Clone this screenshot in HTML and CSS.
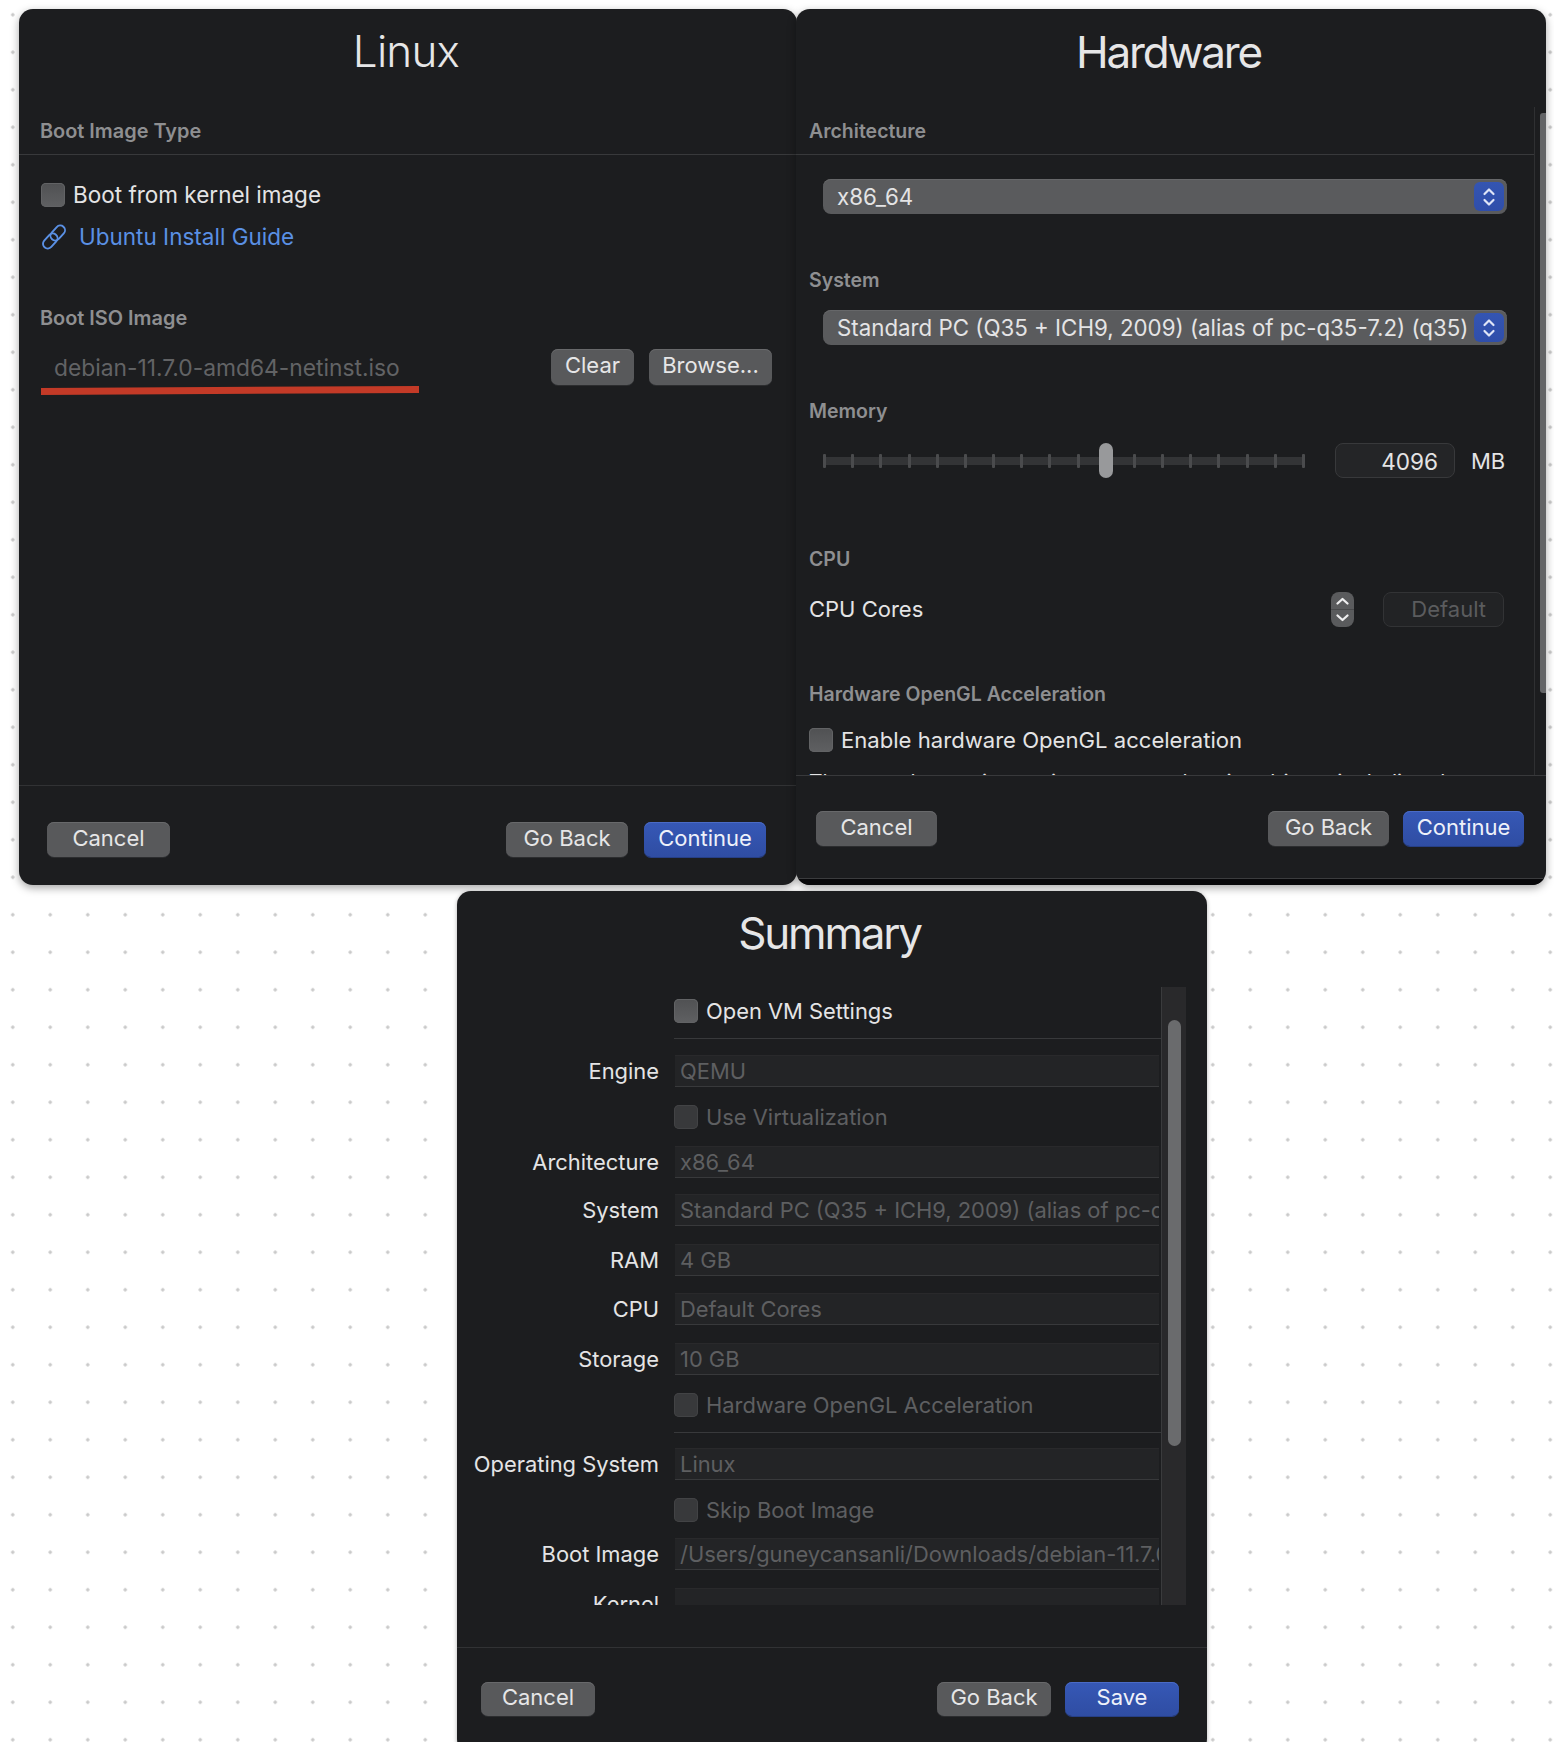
FILE: index.html
```html
<!DOCTYPE html>
<html lang="en">

<head>
    <meta charset="UTF-8" />
    <meta name="viewport" content="width=device-width, initial-scale=1.0" />
    <title>New VM wizard</title>
    <link rel="stylesheet" href="styles.css">
</head>

<body>
    <svg class="sprites" width="0" height="0">
        <symbol id="updown" viewBox="0 0 14 22">
            <path d="M2.5 8 L7 3.5 L11.5 8 M2.5 14 L7 18.5 L11.5 14" fill="none" stroke="currentColor" stroke-width="2.2" stroke-linecap="round" stroke-linejoin="round" />
        </symbol>
        <symbol id="spin" viewBox="0 0 23 35">
            <path d="M0 17.5 H23" stroke="#48494b" stroke-width="1" />
            <path d="M6.5 11.5 L11.5 7 L16.5 11.5 M6.5 23.5 L11.5 28 L16.5 23.5" fill="none" stroke="currentColor" stroke-width="2.3" stroke-linecap="round" stroke-linejoin="round" />
        </symbol>
    </svg>

    <!-- Linux -->
    <section class="window win-linux">
        <h1 class="title title-light">Linux</h1>
        <div class="body">
            <div class="section-label ruled">Boot Image Type</div>
            <label class="check-row first-check"><span class="checkbox"></span>Boot from kernel image</label>
            <a class="link-row">
                <svg class="link-icon" viewBox="0 0 26 26" fill="none" stroke="currentColor" stroke-width="1.9">
                    <rect x="12" y="0.5" width="9.5" height="17" rx="4.75" transform="rotate(42 16.75 9)" />
                    <rect x="4.5" y="8.5" width="9.5" height="17" rx="4.75" transform="rotate(42 9.25 17)" />
                </svg>
                Ubuntu Install Guide
            </a>
            <div class="section-label iso-label">Boot ISO Image</div>
            <div class="iso-row">
                <span class="iso-name">debian-11.7.0-amd64-netinst.iso</span>
                <span class="redline"></span>
                <button class="btn btn-clear">Clear</button>
                <button class="btn btn-browse">Browse...</button>
            </div>
        </div>
        <div class="footer">
            <button class="btn btn-cancel">Cancel</button>
            <span class="spacer"></span>
            <button class="btn">Go Back</button>
            <button class="btn primary">Continue</button>
        </div>
    </section>

    <!-- Hardware -->
    <section class="window win-hardware">
        <h1 class="title">Hardware</h1>
        <div class="scroll-wrap">
            <div class="hw-content">
                <div class="section-label ruled">Architecture</div>
                <div class="select select-first">x86_64<span class="select-arrows"><svg><use href="#updown" /></svg></span></div>
                <div class="section-label hw-gap">System</div>
                <div class="select select-next">Standard PC (Q35 + ICH9, 2009) (alias of pc-q35-7.2) (q35)<span class="select-arrows"><svg><use href="#updown" /></svg></span></div>
                <div class="section-label hw-gap">Memory</div>
                <div class="memory-row">
                    <div class="slider" id="slider"></div>
                    <div class="num-field">4096</div>
                    <span class="unit">MB</span>
                </div>
                <div class="section-label cpu-label">CPU</div>
                <div class="cpu-row">
                    <span class="cpu-name">CPU Cores</span>
                    <span class="spacer"></span>
                    <span class="stepper"><svg><use href="#spin" /></svg></span>
                    <span class="default-field">Default</span>
                </div>
                <div class="section-label gl-label">Hardware OpenGL Acceleration</div>
                <label class="check-row gl-check"><span class="checkbox"></span>Enable hardware OpenGL acceleration</label>
                <p class="cut-note">There are known issues in some acceleration drivers including the</p>
            </div>
            <div class="scrollbar"><div class="thumb"></div></div>
        </div>
        <div class="footer">
            <button class="btn">Cancel</button>
            <span class="spacer"></span>
            <button class="btn">Go Back</button>
            <button class="btn primary">Continue</button>
        </div>
        <div class="bottom-strip"></div>
    </section>

    <!-- Summary -->
    <section class="window win-summary">
        <h1 class="title">Summary</h1>
        <div class="scroll-wrap sum-wrap">
            <div class="sum-content">
                <div class="sum-row m12"><span></span><label class="check-row"><span class="checkbox"></span>Open VM Settings</label></div>
                <div class="sum-rule m15"></div>
                <div class="sum-row m16"><span class="sum-label">Engine</span><div class="field">QEMU</div></div>
                <div class="sum-row m18"><span></span><label class="check-row off"><span class="checkbox"></span>Use Virtualization</label></div>
                <div class="sum-row m17"><span class="sum-label">Architecture</span><div class="field">x86_64</div></div>
                <div class="sum-row m16"><span class="sum-label">System</span><div class="field">Standard PC (Q35 + ICH9, 2009) (alias of pc-q35-7.2) (q35)</div></div>
                <div class="sum-row m18"><span class="sum-label">RAM</span><div class="field">4 GB</div></div>
                <div class="sum-row m17"><span class="sum-label">CPU</span><div class="field">Default Cores</div></div>
                <div class="sum-row m18"><span class="sum-label">Storage</span><div class="field">10 GB</div></div>
                <div class="sum-row m18"><span></span><label class="check-row off"><span class="checkbox"></span>Hardware OpenGL Acceleration</label></div>
                <div class="sum-rule m15"></div>
                <div class="sum-row m15"><span class="sum-label">Operating System</span><div class="field">Linux</div></div>
                <div class="sum-row m18"><span></span><label class="check-row off"><span class="checkbox"></span>Skip Boot Image</label></div>
                <div class="sum-row m16"><span class="sum-label">Boot Image</span><div class="field">/Users/guneycansanli/Downloads/debian-11.7.0-amd64-netinst.iso</div></div>
                <div class="sum-row m18"><span class="sum-label">Kernel</span><div class="field"></div></div>
            </div>
            <div class="sum-track"><div class="sum-thumb"></div></div>
        </div>
        <div class="footer">
            <button class="btn">Cancel</button>
            <span class="spacer"></span>
            <button class="btn">Go Back</button>
            <button class="btn primary">Save</button>
        </div>
    </section>

    <script>
        // 18 ticks along the memory slider, thumb sits on tick 11
        slider = document.getElementById("slider");
        let ticks = "";
        for (let i = 0; i < 18; i++) {
            ticks += i === 10 ? '<span class="slider-thumb"></span>' : '<span class="tick"></span>';
        }
        slider.innerHTML = ticks;
    </script>
</body>

</html>
```
FILE: styles.css
```css
html,
body {
    margin: 0;
    height: 100%;
    overflow: hidden;
}

body {
    background-color: #fff;
    background-image: radial-gradient(circle, #c9c9c9 1.4px, transparent 1.9px);
    background-size: 37.5px 37.5px;
    background-position: -6px -4px;
    font-family: "Inter", "Liberation Sans", sans-serif;
    font-size: 22.5px;
    color: #e4e4e5;
}

.sprites {
    position: absolute;
}

.window {
    position: absolute;
    display: flex;
    flex-direction: column;
    background-color: #1c1d1f;
    border-radius: 14px;
    overflow: hidden;
    box-shadow: 0 3px 8px rgba(0, 0, 0, 0.35);
}

.win-linux {
    left: 19px;
    top: 9px;
    width: 778px;
    height: 876px;
}

.win-hardware {
    left: 796px;
    top: 9px;
    width: 750px;
    height: 876px;
    font-size: 22px;
}

.win-summary {
    left: 457px;
    top: 891px;
    width: 750px;
    height: 862px;
    font-size: 21.9px;
    box-shadow: 0 1px 4px rgba(0, 0, 0, 0.3);
}

.title {
    margin: 0;
    height: 86px;
    line-height: 86px;
    text-align: center;
    font-size: 44px;
    font-weight: 400;
    color: #e6e6e7;
    letter-spacing: -2.2px;
}

.title-light {
    font-weight: 300;
    letter-spacing: -0.8px;
    line-height: 84px;
}

.win-linux .title {
    padding-right: 4px;
}

.win-hardware .title {
    padding-right: 5px;
}

.body {
    flex: 1;
}

.section-label {
    height: 24px;
    line-height: 24px;
    font-size: 19.9px;
    font-weight: 600;
    color: #8e8f91;
    padding-left: 21px;
}

.ruled {
    padding-top: 24px;
    padding-bottom: 11px;
    border-bottom: 1px solid #38393b;
}

.check-row {
    display: flex;
    align-items: flex-start;
    height: 24px;
    line-height: 24px;
    gap: 8px;
    white-space: nowrap;
}

.checkbox {
    flex: none;
    width: 24px;
    height: 24px;
    border-radius: 5px;
    background: linear-gradient(#505153, #5f6062);
    box-shadow: inset 0 0 0 1px #626365;
}

.first-check {
    margin: 28px 0 0 22px;
}

.link-row {
    display: flex;
    align-items: flex-start;
    gap: 12px;
    height: 24px;
    line-height: 24px;
    margin: 18px 0 0 22px;
    color: #5a90e4;
}

.link-icon {
    width: 26px;
    height: 26px;
    margin-top: -1px;
    flex: none;
}

.iso-label {
    margin-top: 57px;
}

.iso-row {
    position: relative;
    display: flex;
    align-items: center;
    height: 36px;
    margin: 19px 25px 0 22px;
}

.iso-name {
    flex: 1;
    padding-left: 13px;
    font-size: 22.8px;
    color: #626365;
}

.redline {
    position: absolute;
    left: 0;
    top: 38px;
    width: 378px;
    height: 7px;
    background-color: #c33a27;
    transform: rotate(-0.3deg);
}

.btn {
    height: 36px;
    padding: 0 0 4px;
    border: none;
    border-radius: 7px;
    background-color: #58595b;
    box-shadow: inset 0 1px 0 #68696b, 0 1px 0 #2c2d2f;
    color: #e6e6e7;
    font: inherit;
    font-size: 22px;
}

.primary {
    background: linear-gradient(#3658b6, #2f4da3);
    box-shadow: inset 0 1px 0 #4a6bc6, 0 1px 0 #263f86;
    color: #eef1fa;
}

.btn-clear {
    width: 83px;
    margin-right: 15px;
}

.btn-browse {
    width: 123px;
}

.footer {
    display: flex;
    gap: 16px;
    height: 100px;
    flex: none;
    box-sizing: border-box;
    padding: 36px 31px 0 28px;
    border-top: 1px solid #313234;
}

.footer .btn {
    width: 122px;
    height: 35px;
}

.footer .btn-cancel {
    width: 123px;
}

.spacer {
    flex: 1;
}

/* hardware */
.scroll-wrap {
    display: flex;
    flex: 1;
    min-height: 0;
}

.hw-content {
    flex: 1;
    min-width: 0;
    overflow: hidden;
}

.hw-content .section-label {
    padding-left: 13px;
    font-size: 19.5px;
}

.scrollbar {
    flex: none;
    width: 11px;
    margin-top: 12px;
    border-left: 1px solid #2f3032;
    padding-top: 6px;
    display: flex;
    justify-content: flex-end;
    align-items: flex-start;
}

.thumb {
    width: 6px;
    height: 580px;
    border-radius: 3px 0 0 3px;
    background-color: #636466;
}

.select {
    position: relative;
    height: 35px;
    line-height: 35px;
    margin: 0 27px 0 27px;
    padding-left: 14px;
    border-radius: 8px;
    background-color: #5a5b5d;
    box-shadow: inset 0 1px 0 #666769;
    white-space: nowrap;
    font-size: 22.3px;
}

.select-first {
    margin-top: 24px;
}

.select-next {
    margin-top: 18px;
}

.select-arrows {
    position: absolute;
    right: 3px;
    top: 3px;
    width: 30px;
    height: 29px;
    border-radius: 6px;
    background: linear-gradient(#3455b2, #2f4eaa);
    color: #dfe5f7;
    display: flex;
    align-items: center;
    justify-content: center;
}

.select-arrows svg {
    width: 14px;
    height: 22px;
}

.hw-gap {
    margin-top: 54px;
}

.memory-row {
    display: flex;
    align-items: center;
    height: 35px;
    margin: 20px 28px 0 27px;
}

.slider {
    position: relative;
    display: flex;
    justify-content: space-between;
    align-items: center;
    width: 482px;
    height: 35px;
    margin-right: 30px;
    background: linear-gradient(#333436, #333436) center / 100% 8px no-repeat;
}

.tick {
    width: 3px;
    height: 14px;
    background-color: #4a4b4d;
    border-radius: 1px;
}

.slider-thumb {
    width: 14px;
    height: 35px;
    margin: 0 -5.5px;
    border-radius: 7px;
    background-color: #98999b;
}

.num-field {
    width: 120px;
    height: 35px;
    box-sizing: border-box;
    line-height: 35px;
    padding-right: 16px;
    text-align: right;
    border: 1px solid #38393b;
    border-radius: 8px;
    background-color: #242527;
    font-size: 22.6px;
}

.unit {
    margin-left: 16px;
}

.cpu-label {
    margin-top: 69px;
}

.cpu-row {
    display: flex;
    align-items: center;
    height: 35px;
    margin: 21px 30px 0 13px;
}

.cpu-name {
    margin-bottom: 2px;
}

.stepper {
    width: 23px;
    height: 35px;
    margin-right: 29px;
    border-radius: 8px;
    background-color: #5a5b5d;
    color: #eeeeef;
}

.stepper svg {
    display: block;
    width: 23px;
    height: 35px;
}

.default-field {
    width: 121px;
    height: 35px;
    box-sizing: border-box;
    line-height: 33px;
    padding-right: 17px;
    text-align: right;
    border: 1px solid #323335;
    border-radius: 8px;
    background-color: #222325;
    color: #5b5c5e;
}

.gl-label {
    margin-top: 55px;
}

.gl-check {
    margin: 22px 0 0 13px;
    font-size: 22.1px;
}

.cut-note {
    margin: 19px 0 0 13px;
    line-height: 24px;
    white-space: nowrap;
    font-size: 21px;
}

.win-hardware .footer {
    height: 103px;
    gap: 14px;
    padding: 35px 22px 0 20px;
    border-top-color: #38393b;
}

.win-hardware .footer .btn {
    width: 121px;
}

.bottom-strip {
    flex: none;
    height: 6px;
    border-top: 1px solid #3b3c3e;
    background-color: #08080a;
}

/* summary */
.win-summary .title {
    height: 88px;
    line-height: 84px;
    padding-right: 5px;
}

.sum-wrap {
    flex: none;
    height: 618px;
    margin: 8px 21px 0 0;
}

.sum-content {
    flex: 1;
    min-width: 0;
    overflow: hidden;
}

.sum-row {
    display: grid;
    grid-template-columns: 202px 1fr;
    column-gap: 15px;
    align-items: center;
}

.sum-label {
    text-align: right;
    white-space: nowrap;
    margin-bottom: 1px;
}

.sum-rule {
    height: 1px;
    margin-left: 217px;
    background-color: #38393b;
}

.field {
    height: 32px;
    box-sizing: border-box;
    line-height: 30px;
    margin: 0 2px 0 1px;
    padding-left: 5px;
    overflow: hidden;
    white-space: nowrap;
    background-color: #232426;
    border-top: 1px solid #29292b;
    border-bottom: 1px solid #38393b;
    color: #5e5f61;
}

.off {
    color: #5e5f61;
}

.off .checkbox {
    background: #38393b;
    box-shadow: inset 0 0 0 1px #424345;
}

.m12 {
    margin-top: 12px;
}

.m15 {
    margin-top: 15px;
}

.m16 {
    margin-top: 16px;
}

.m17 {
    margin-top: 17px;
}

.m18 {
    margin-top: 18px;
}

.sum-track {
    flex: none;
    width: 25px;
    padding: 33px 0 0 6px;
    box-sizing: border-box;
    border-left: 1px solid #3a3b3d;
    background-color: #29292b;
}

.sum-thumb {
    width: 13px;
    height: 426px;
    border-radius: 7px;
    background-color: #6a6b6d;
}

.win-summary .footer {
    flex: none;
    height: 106px;
    margin-top: 42px;
    gap: 14px;
    padding: 34px 28px 0 24px;
}

.win-summary .footer .btn {
    width: 114px;
    height: 34px;
}
```
